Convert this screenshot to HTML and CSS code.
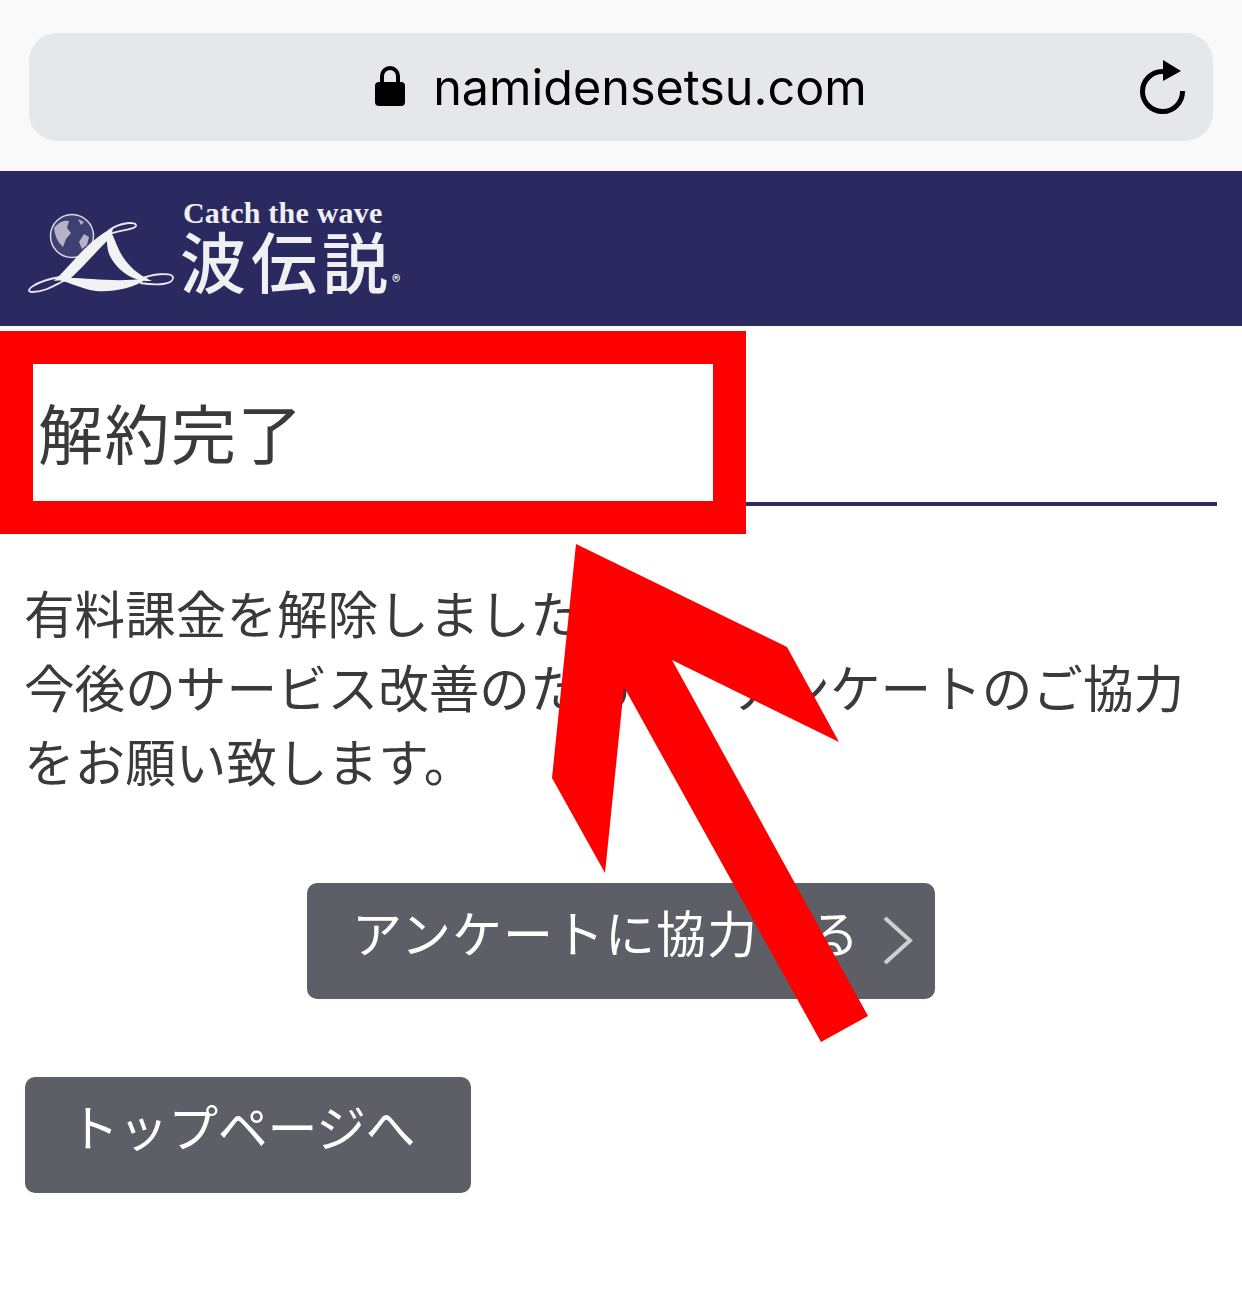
FILE: index.html

```html
<!DOCTYPE html>
<html lang="ja">
<head>
    <meta charset="UTF-8">
    <meta name="viewport" content="width=device-width, initial-scale=1.0">
    <title>波伝説 - 解約完了</title>
    <link rel="stylesheet" href="styles.css">
</head>
<body>
    <div class="browser-bar">
        <div class="url-pill">
            <svg class="lock-icon" width="30" height="42" viewBox="0 0 30 42">
                <path d="M7 20V11a8 8 0 0 1 16 0v9" fill="none" stroke="#000" stroke-width="4"/>
                <rect x="0" y="17" width="30" height="24" rx="4" fill="#000"/>
            </svg>
            <span class="url-text">namidensetsu.com</span>
            <svg class="reload-icon" width="48" height="54" viewBox="0 0 48 54">
                <path d="M25 11.500A20 20 0 1 0 44.500 31" fill="none" stroke="#000" stroke-width="5"/>
                <path d="M25 0L43 11L25 21z" fill="#000"/>
            </svg>
        </div>
    </div>

    <header class="site-header">
        <div class="logo">
            <svg class="logo-mark" width="150" height="84" viewBox="25 212 150 84">
                <circle cx="72" cy="236" r="21.500" fill="#3f3f72" stroke="#d8d8e2" stroke-width="1.500"/>
                <path d="M54 228q7-9 15-7l-2 7 4 5-5 6-3 8q-8-7-9-19zM78 219l6 3-3 3zM84 234l5 3-2 8-5 4-3-7z" fill="#b4b4c8"/>
                <g fill="none" stroke="#e9e9ee" stroke-width="1.800">
                    <path d="M60 277C32 282 24 292 32 292 46 292 56 284 66 280"/>
                    <path d="M140 283C160 286 174 284 173 277 171 272 152 274 140 279"/>
                    <path d="M108 231C120 222 137 221 136 226 135 230 122 229 110 234"/>
                </g>
                <path d="M54 281C72 264 90 238 113 228 112 234 111 236 108 240 94 254 82 268 70 279z" fill="#f2f2f5"/>
                <path d="M105 233C112 227 113 238 120 252 127 265 138 275 152 281 132 282 117 270 110 256 106 248 108 240 105 233z" fill="#f2f2f5"/>
                <path d="M54 279C78 275 110 284 148 278 130 291 104 293 90 290 78 287 66 281 54 279z" fill="#f2f2f5"/>
            </svg>
            <div class="logo-words">
                <span class="logo-catch">Catch the wave</span>
                <span class="logo-name">波伝説<small>®</small></span>
            </div>
        </div>
    </header>

    <main class="content">
        <h1 class="page-title">解約完了</h1>
        <p class="message">有料課金を解除しました。<br>今後のサービス改善のために、アンケートのご協力をお願い致します。</p>

        <div class="survey-row">
            <a class="btn btn-survey" href="#">
                アンケートに協力する
                <svg class="chevron" width="30" height="50" viewBox="0 0 30 50">
                    <path d="M2 2L27 24.500 2 47" fill="none" stroke="#cfcfd2" stroke-width="4"/>
                </svg>
            </a>
        </div>
        <a class="btn btn-top" href="#">トップページへ</a>
    </main>

    <!-- annotations drawn over the screenshot -->
    <div class="red-frame"></div>
    <svg class="red-arrow" width="1242" height="1308" viewBox="0 0 1242 1308">
        <polygon points="576,544 787,647 839,742 672,660 868,1016 821,1042 624,687 605,873 552,778" fill="#ff0000"/>
    </svg>
</body>
</html>
```

FILE: styles.css

```css
* {
    margin: 0;
    padding: 0;
    box-sizing: border-box;
}

body {
    position: relative;
    height: 1308px;
    overflow: hidden;
    background: #fff;
    color: #3a3a3a;
    font-family: "Noto Sans CJK JP", "Noto Sans", sans-serif;
}

.browser-bar {
    height: 171px;
    padding: 33px 29px 30px;
    background: #f9f9f9;
}

.url-pill {
    position: relative;
    display: flex;
    align-items: center;
    justify-content: center;
    height: 108px;
    background: #e6e7e9;
    border-radius: 28px;
}

.lock-icon {
    margin-right: 28px;
    margin-top: -3px;
}

.url-text {
    font-family: Inter, Roboto, sans-serif;
    font-size: 48.500px;
    font-weight: 400;
    color: #000;
}

.reload-icon {
    position: absolute;
    right: 27px;
    top: 27px;
}

.site-header {
    height: 155px;
    padding: 29px 0 0 25px;
    background: #2b2a60;
}

.logo {
    display: flex;
    align-items: flex-start;
}

.logo-mark {
    margin-top: 12px;
    margin-right: 8px;
    filter: blur(0.5px);
}

.logo-words {
    display: flex;
    flex-direction: column;
    color: #f0f0f3;
}

.logo-catch {
    font-family: "Liberation Serif", serif;
    font-size: 30px;
    font-weight: 700;
    line-height: 26px;
    letter-spacing: 0.200px;
}

.logo-name {
    margin-left: -3px;
    font-size: 66px;
    font-weight: 500;
    line-height: 66px;
    letter-spacing: 5px;
}

.logo-name small {
    font-size: 17px;
    letter-spacing: 0;
    margin-left: -1px;
}

.content {
    padding: 0 25px;
}

.page-title {
    height: 180px;
    padding: 64px 0 0 13px;
    border-bottom: 4px solid #2b2a60;
    font-size: 65px;
    font-weight: 400;
    line-height: 82px;
    letter-spacing: 1.500px;
}

.message {
    margin-top: 69px;
    margin-left: -1px;
    font-size: 50.600px;
    font-weight: 400;
    line-height: 74px;
}

.survey-row {
    display: flex;
    justify-content: center;
    margin-top: 86px;
}

.btn {
    display: inline-flex;
    align-items: center;
    height: 116px;
    padding-bottom: 20px;
    background: #5e5e66;
    border-radius: 10px;
    color: #fff;
    font-size: 50px;
    font-weight: 400;
    text-decoration: none;
}

.btn-survey {
    width: 628px;
    padding-left: 45px;
    letter-spacing: 1px;
}

.chevron {
    margin-left: 23px;
    margin-top: 20px;
}

.btn-top {
    width: 446px;
    margin-top: 78px;
    padding-left: 44px;
    letter-spacing: -0.400px;
}

.red-frame {
    position: absolute;
    left: 0;
    top: 331px;
    width: 746px;
    height: 203px;
    border: 33px solid #ff0000;
}

.red-arrow {
    position: absolute;
    left: 0;
    top: 0;
    pointer-events: none;
}
```
